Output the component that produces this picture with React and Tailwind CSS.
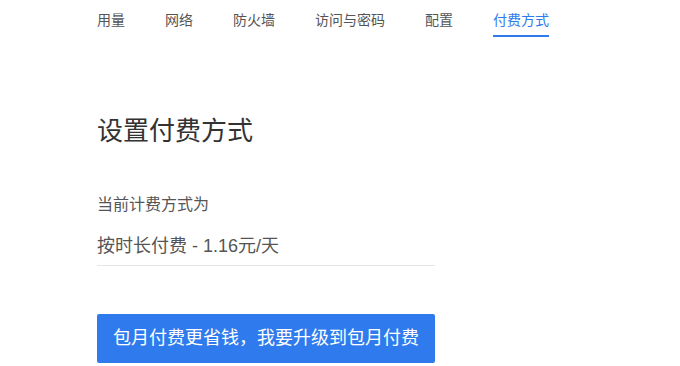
import React, { useState } from 'react';

const tabs = ['用量', '网络', '防火墙', '访问与密码', '配置', '付费方式'];

const font = { fontFamily: '"Liberation Sans", "Noto Sans CJK SC", sans-serif' };

const App = () => {
  const [active, setActive] = useState('付费方式');

  return (
    <div className="min-h-screen bg-white" style={font}>
      {/* Tabs */}
      <div className="flex gap-[40px] pl-[97px]">
        {tabs.map((tab) => (
          <button
            key={tab}
            onClick={() => setActive(tab)}
            className={
              tab === active
                ? 'pt-[10px] pb-[5px] text-sm leading-[20px] text-[#2f7bee] border-b-2 border-[#2f7bee]'
                : 'pt-[10px] pb-[5px] text-sm leading-[20px] text-[#555] border-b-2 border-transparent'
            }
          >
            {tab}
          </button>
        ))}
      </div>

      <div className="ml-[97px] w-[338px]">
        <h1 className="mt-[76px] text-[26px] leading-[36px] text-[#333]">设置付费方式</h1>

        <p className="mt-[44px] text-base leading-[24px] text-[#555]">当前计费方式为</p>

        <div className="mt-[15px] pb-[5px] border-b border-[#e5e5e5] text-[18px] leading-[28px] text-[#555]">
          按时长付费 - 1.16元/天
        </div>

        <button className="mt-[48px] w-full h-[49px] bg-[#2f7bee] text-white text-[18px] rounded-[2px]">
          包月付费更省钱，我要升级到包月付费
        </button>
      </div>
    </div>
  );
};

export default App;
